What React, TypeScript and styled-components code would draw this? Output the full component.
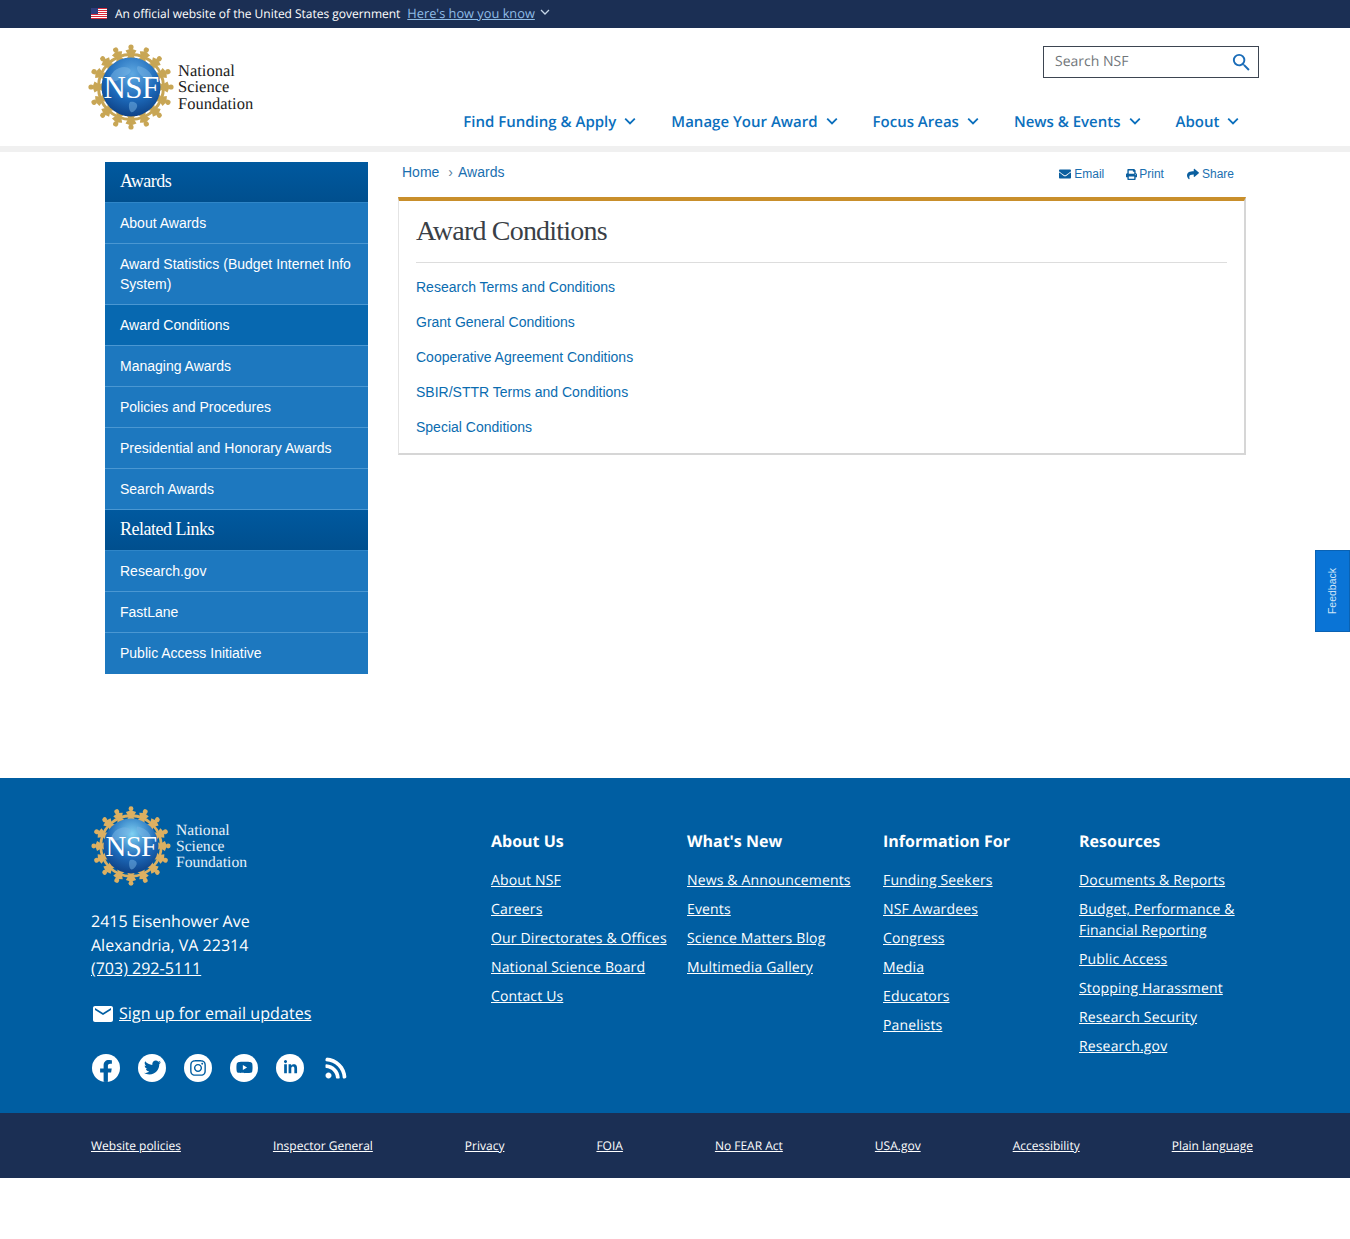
import React from "react";
import styled, { createGlobalStyle } from "styled-components";
import { FaEnvelope, FaPrint, FaShare, FaFacebookF, FaTwitter, FaInstagram, FaYoutube, FaLinkedinIn, FaRss } from "react-icons/fa";
import { MdEmail, MdSearch } from "react-icons/md";

const Global = createGlobalStyle`
  html, body { margin: 0; padding: 0; background: #fff; }
  body { font-family: "Liberation Sans", Arial, sans-serif; font-size: 14px; color: #333; }
  * { box-sizing: border-box; }
  a { text-decoration: none; }
`;

const Page = styled.div`
  width: 1350px;
  position: relative;
`;

/* Government banner */
const Banner = styled.div`
  height: 28px;
  background: #1b2f54;
  padding: 0 0 2px 91px;
  display: flex;
  align-items: center;
  font-family: "Open Sans", sans-serif;
  text-rendering: geometricPrecision;
  font-size: 12px;
  color: #fff;
`;
const BannerText = styled.span`
  margin-left: 8px;
  letter-spacing: -0.02px;
`;
const BannerLink = styled.a`
  margin-left: 7px;
  color: #8fbce6;
  text-decoration: underline;
  font-size: 12.8px;
`;
const BannerChevron = styled.span`
  margin-left: 5px;
  display: inline-flex;
  margin-top: -2px;
`;

/* Header */
const Header = styled.header`
  height: 124px;
  border-bottom: 6px solid #f0f0f0;
  padding: 16px 91px 0 88px;
  display: flex;
  justify-content: space-between;
`;
const LogoWrap = styled.div<{ $footer?: boolean }>`
  display: flex;
  align-items: center;
  height: ${(p) => (p.$footer ? 80 : 86)}px;
  gap: ${(p) => (p.$footer ? 5 : 4)}px;
`;
const LogoWords = styled.div<{ $footer?: boolean }>`
  font-family: "Liberation Serif", serif;
  text-rendering: geometricPrecision;
  font-size: ${(p) => (p.$footer ? 15.6 : 16.5)}px;
  line-height: ${(p) => (p.$footer ? 16 : 16.5)}px;
  color: ${(p) => (p.$footer ? "#e6f0f9" : "#222")};
  padding-top: 1px;
`;
const HeaderRight = styled.div`
  display: flex;
  flex-direction: column;
  align-items: flex-end;
  padding-top: 2px;
`;
const SearchBox = styled.div`
  width: 216px;
  height: 32px;
  border: 1px solid #3d4551;
  display: flex;
  align-items: center;
  justify-content: space-between;
  padding: 0 5px 2px 11px;
  font-family: "Open Sans", sans-serif;
  text-rendering: geometricPrecision;
  font-size: 14px;
  color: #71767a;
  svg { color: #1a6cb8; margin-top: 2px; }
`;
const Nav = styled.nav`
  display: flex;
  gap: 35px;
  margin-top: 33px;
  margin-right: 19.6px;
`;
const NavItem = styled.a`
  display: flex;
  align-items: center;
  gap: 8px;
  font-family: "Open Sans", sans-serif;
  text-rendering: geometricPrecision;
  font-weight: 600;
  font-size: 15px;
  line-height: 22px;
  color: #0b6fbd;
  white-space: nowrap;
  svg { margin-top: -2px; }
`;

/* Body */
const Content = styled.main`
  min-height: 626px;
  padding: 10px 0 0 105px;
  display: flex;
  align-items: flex-start;
  gap: 30px;
`;
const Sidebar = styled.aside`
  width: 263px;
  background: #1d78bf;
`;
const SideHead = styled.div`
  height: 41px;
  padding: 9px 15px 0;
  background: linear-gradient(#00599f, #004f8e);
  border-bottom: 1px solid #2f86c8;
  font-family: "Liberation Serif", serif;
  font-size: 18px;
  line-height: 20px;
  letter-spacing: -0.5px;
  color: #fff;
`;
const SideLink = styled.a<{ $active?: boolean }>`
  display: block;
  padding: 10px 15px;
  line-height: 20px;
  color: #fff;
  background: ${(p) => (p.$active ? "#0768b0" : "#1d78bf")};
  border-bottom: 1px solid #4a97d2;
  &:last-child { border-bottom-color: #1d78bf; }
`;
const Article = styled.section`
  width: 848px;
`;
const TopRow = styled.div`
  height: 35px;
  display: flex;
  justify-content: space-between;
  padding-left: 4px;
`;
const Crumbs = styled.div`
  display: flex;
  align-items: center;
  height: 20px;
  color: #1a6fb0;
`;
const CrumbSep = styled.span`
  margin: 0 5px 0 9px;
  font-size: 14px;
  color: #5a7fa0;
`;
const Tools = styled.div`
  display: flex;
  gap: 22px;
  padding: 4px 12px 0 0;
`;
const Tool = styled.a<{ $tight?: boolean }>`
  display: flex;
  align-items: center;
  gap: ${(p) => (p.$tight ? 2 : 3)}px;
  margin-right: ${(p) => (p.$tight ? 1 : 0)}px;
  height: 16px;
  font-size: 12px;
  color: #1a6fb0;
  svg { color: #0b5f9f; }
`;
const Card = styled.div`
  border-top: 4px solid #c98f2b;
  border-left: 1px solid #e4e4e4;
  border-right: 2px solid #d6d6d6;
  border-bottom: 2px solid #d6d6d6;
  padding: 0 17px;
  height: 258px;
`;
const Title = styled.h1`
  margin: 0;
  height: 62px;
  padding-top: 13px;
  border-bottom: 1px solid #ddd;
  font-family: "Liberation Serif", serif;
  font-weight: 400;
  font-size: 28px;
  line-height: 33px;
  letter-spacing: -0.8px;
  color: #3a3f47;
`;
const LinkList = styled.div`
  display: flex;
  flex-direction: column;
  gap: 15px;
  padding-top: 14px;
`;
const CardLink = styled.a`
  line-height: 20px;
  color: #0a6cb0;
`;

/* Footer */
const Footer = styled.footer`
  height: 335px;
  background: #005ea2;
  padding: 28px 0 0 91px;
  display: flex;
  font-family: "Open Sans", sans-serif;
  text-rendering: geometricPrecision;
  color: #fff;
`;
const FooterLeft = styled.div`
  width: 400px;
`;
const Address = styled.div`
  margin-top: 24px;
  font-size: 16px;
  line-height: 23.5px;
  a { color: #fff; text-decoration: underline; }
`;
const Signup = styled.a`
  display: flex;
  align-items: center;
  gap: 4px;
  height: 24px;
  margin-top: 20px;
  font-size: 16px;
  line-height: 24px;
  letter-spacing: 0.08px;
  color: #fff;
  span { text-decoration: underline; }
  svg { margin-top: 2px; }
`;
const Socials = styled.div`
  display: flex;
  gap: 18px;
  margin: 29px 0 0 1px;
`;
const Social = styled.span<{ $plain?: boolean }>`
  width: 28px;
  height: 28px;
  border-radius: 50%;
  display: flex;
  align-items: center;
  justify-content: center;
  background: ${(p) => (p.$plain ? "transparent" : "#fff")};
  color: ${(p) => (p.$plain ? "#fff" : "#005ea2")};
  overflow: hidden;
`;
const Columns = styled.div`
  display: flex;
  padding-top: 23px;
`;
const Column = styled.div`
  width: 196px;
  padding-right: 18px;
`;
const ColTitle = styled.h3`
  margin: 0 0 17px;
  font-size: 16px;
  line-height: 24px;
  font-weight: 700;
`;
const ColLink = styled.a`
  display: block;
  margin-bottom: 8px;
  font-size: 14px;
  line-height: 21px;
  letter-spacing: 0.15px;
  color: #fff;
  text-decoration: underline;
`;
const SubFooter = styled.div`
  height: 65px;
  background: #1b2f54;
  padding: 0 97px 0 91px;
  display: flex;
  justify-content: space-between;
  align-items: center;
`;
const SubLink = styled.a`
  font-family: "Open Sans", sans-serif;
  text-rendering: geometricPrecision;
  font-size: 12px;
  color: #fff;
  text-decoration: underline;
`;
const Feedback = styled.a`
  position: absolute;
  right: 0;
  top: 550px;
  width: 35px;
  height: 82px;
  padding-right: 1px;
  background: #0a74d6;
  border: 1px solid #0a62b3;
  color: #cfe4f7;
  font-size: 10.5px;
  display: flex;
  align-items: center;
  justify-content: center;
  span { transform: rotate(-90deg); display: block; }
`;

const FlagIcon = () => (
  <svg width="16" height="11" viewBox="0 0 16 11">
    <rect width="16" height="11" fill="#fff" />
    {[0, 2, 4, 6, 8, 10].map((y) => (
      <rect key={y} y={y} width="16" height="1" fill="#d8283a" />
    ))}
    <rect width="7" height="6" fill="#2f3d7c" />
  </svg>
);

const Chevron = ({ size, color, sw = 2 }: { size: number; color: string; sw?: number }) => (
  <svg width={size} height={size} viewBox="0 0 12 12" fill="none" stroke={color} strokeWidth={sw}>
    <path d="M1.2 3.6L6 8.4l4.8-4.8" />
  </svg>
);

const Logo = ({ size, id, footer }: { size: number; id: string; footer?: boolean }) => {
  const figures = Array.from({ length: 16 }, (_, i) => i * 22.5);
  const gold = footer ? "#dcb062" : "#c8a655";
  return (
    <svg width={size} height={size} viewBox="0 0 86 86">
      <defs>
        <radialGradient id={id} cx="52%" cy="28%" r="80%">
          <stop offset="0%" stopColor={footer ? "#7fd0f2" : "#5fa9e2"} />
          <stop offset="55%" stopColor="#1c68b8" />
          <stop offset="100%" stopColor="#0a3778" />
        </radialGradient>
      </defs>
      <circle cx="43" cy="43" r="32.5" fill="none" stroke={gold} strokeWidth="3" />
      {figures.map((a) => (
        <g key={a} transform={`rotate(${a} 43 43)`} fill={gold}>
          <circle cx="43" cy="3" r="2.6" />
          <path d="M43 4.5 L48.5 6.5 L45.5 11.5 L47.5 15 L38.5 15 L40.5 11.5 L37.5 6.5 Z" />
        </g>
      ))}
      <circle cx="43" cy="43" r="29.5" fill={`url(#${id})`} />
      <path d="M26 27c6-5 13-5 16-2s-3 6-7 8-7 6-11 3 0-6 2-9zM50 22c6 1 12 5 14 10s-5 4-9 1-8-9-5-11zM42 58c5-1 8 2 7 5s-4 6-6 5-3-8-1-10z" fill="#79b6e6" opacity=".5" />
      <text x="43" y="53.5" textAnchor="middle" fontFamily="Liberation Serif, serif" fontSize="31" letterSpacing="-0.6" fill="#fff">NSF</text>
    </svg>
  );
};

const sideMain = ["About Awards", "Award Statistics (Budget Internet Info System)", "Award Conditions", "Managing Awards", "Policies and Procedures", "Presidential and Honorary Awards", "Search Awards"];
const sideRelated = ["Research.gov", "FastLane", "Public Access Initiative"];
const navItems = ["Find Funding & Apply", "Manage Your Award", "Focus Areas", "News & Events", "About"];
const cardLinks = ["Research Terms and Conditions", "Grant General Conditions", "Cooperative Agreement Conditions", "SBIR/STTR Terms and Conditions", "Special Conditions"];
const columns = [
  { title: "About Us", links: ["About NSF", "Careers", "Our Directorates & Offices", "National Science Board", "Contact Us"] },
  { title: "What's New", links: ["News & Announcements", "Events", "Science Matters Blog", "Multimedia Gallery"] },
  { title: "Information For", links: ["Funding Seekers", "NSF Awardees", "Congress", "Media", "Educators", "Panelists"] },
  { title: "Resources", links: ["Documents & Reports", "Budget, Performance & Financial Reporting", "Public Access", "Stopping Harassment", "Research Security", "Research.gov"] },
];
const subLinks = ["Website policies", "Inspector General", "Privacy", "FOIA", "No FEAR Act", "USA.gov", "Accessibility", "Plain language"];

export default function App() {
  return (
    <Page>
      <Global />
      <Banner>
        <FlagIcon />
        <BannerText>An official website of the United States government</BannerText>
        <BannerLink>Here's how you know</BannerLink>
        <BannerChevron><Chevron size={10} color="#c5d6e8" sw={1.5} /></BannerChevron>
      </Banner>
      <Header>
        <LogoWrap>
          <Logo size={86} id="logo-a" />
          <LogoWords>National<br />Science<br />Foundation</LogoWords>
        </LogoWrap>
        <HeaderRight>
          <SearchBox>
            Search NSF
            <MdSearch size={23} />
          </SearchBox>
          <Nav>
            {navItems.map((n) => (
              <NavItem key={n}>{n}<Chevron size={12} color="#0b6fbd" sw={1.8} /></NavItem>
            ))}
          </Nav>
        </HeaderRight>
      </Header>
      <Content>
        <Sidebar>
          <SideHead>Awards</SideHead>
          {sideMain.map((s) => (
            <SideLink key={s} $active={s === "Award Conditions"}>{s}</SideLink>
          ))}
          <SideHead>Related Links</SideHead>
          {sideRelated.map((s) => (
            <SideLink key={s}>{s}</SideLink>
          ))}
        </Sidebar>
        <Article>
          <TopRow>
            <Crumbs>Home<CrumbSep>›</CrumbSep>Awards</Crumbs>
            <Tools>
              <Tool><FaEnvelope size={12} />Email</Tool>
              <Tool $tight><FaPrint size={11} />Print</Tool>
              <Tool><FaShare size={12} />Share</Tool>
            </Tools>
          </TopRow>
          <Card>
            <Title>Award Conditions</Title>
            <LinkList>
              {cardLinks.map((c) => (
                <CardLink key={c}>{c}</CardLink>
              ))}
            </LinkList>
          </Card>
        </Article>
      </Content>
      <Footer>
        <FooterLeft>
          <LogoWrap $footer>
            <Logo size={80} id="logo-b" footer />
            <LogoWords $footer>National<br />Science<br />Foundation</LogoWords>
          </LogoWrap>
          <Address>
            2415 Eisenhower Ave<br />Alexandria, VA 22314<br /><a>(703) 292-5111</a>
          </Address>
          <Signup><MdEmail size={24} /><span>Sign up for email updates</span></Signup>
          <Socials>
            <Social><FaFacebookF size={22} style={{ marginTop: 6 }} /></Social>
            <Social><FaTwitter size={17} /></Social>
            <Social><FaInstagram size={18} /></Social>
            <Social><FaYoutube size={17} /></Social>
            <Social><FaLinkedinIn size={15} /></Social>
            <Social $plain><FaRss size={24} /></Social>
          </Socials>
        </FooterLeft>
        <Columns>
          {columns.map((c) => (
            <Column key={c.title}>
              <ColTitle>{c.title}</ColTitle>
              {c.links.map((l) => (
                <ColLink key={l}>{l}</ColLink>
              ))}
            </Column>
          ))}
        </Columns>
      </Footer>
      <SubFooter>
        {subLinks.map((s) => (
          <SubLink key={s}>{s}</SubLink>
        ))}
      </SubFooter>
      <Feedback><span>Feedback</span></Feedback>
    </Page>
  );
}
